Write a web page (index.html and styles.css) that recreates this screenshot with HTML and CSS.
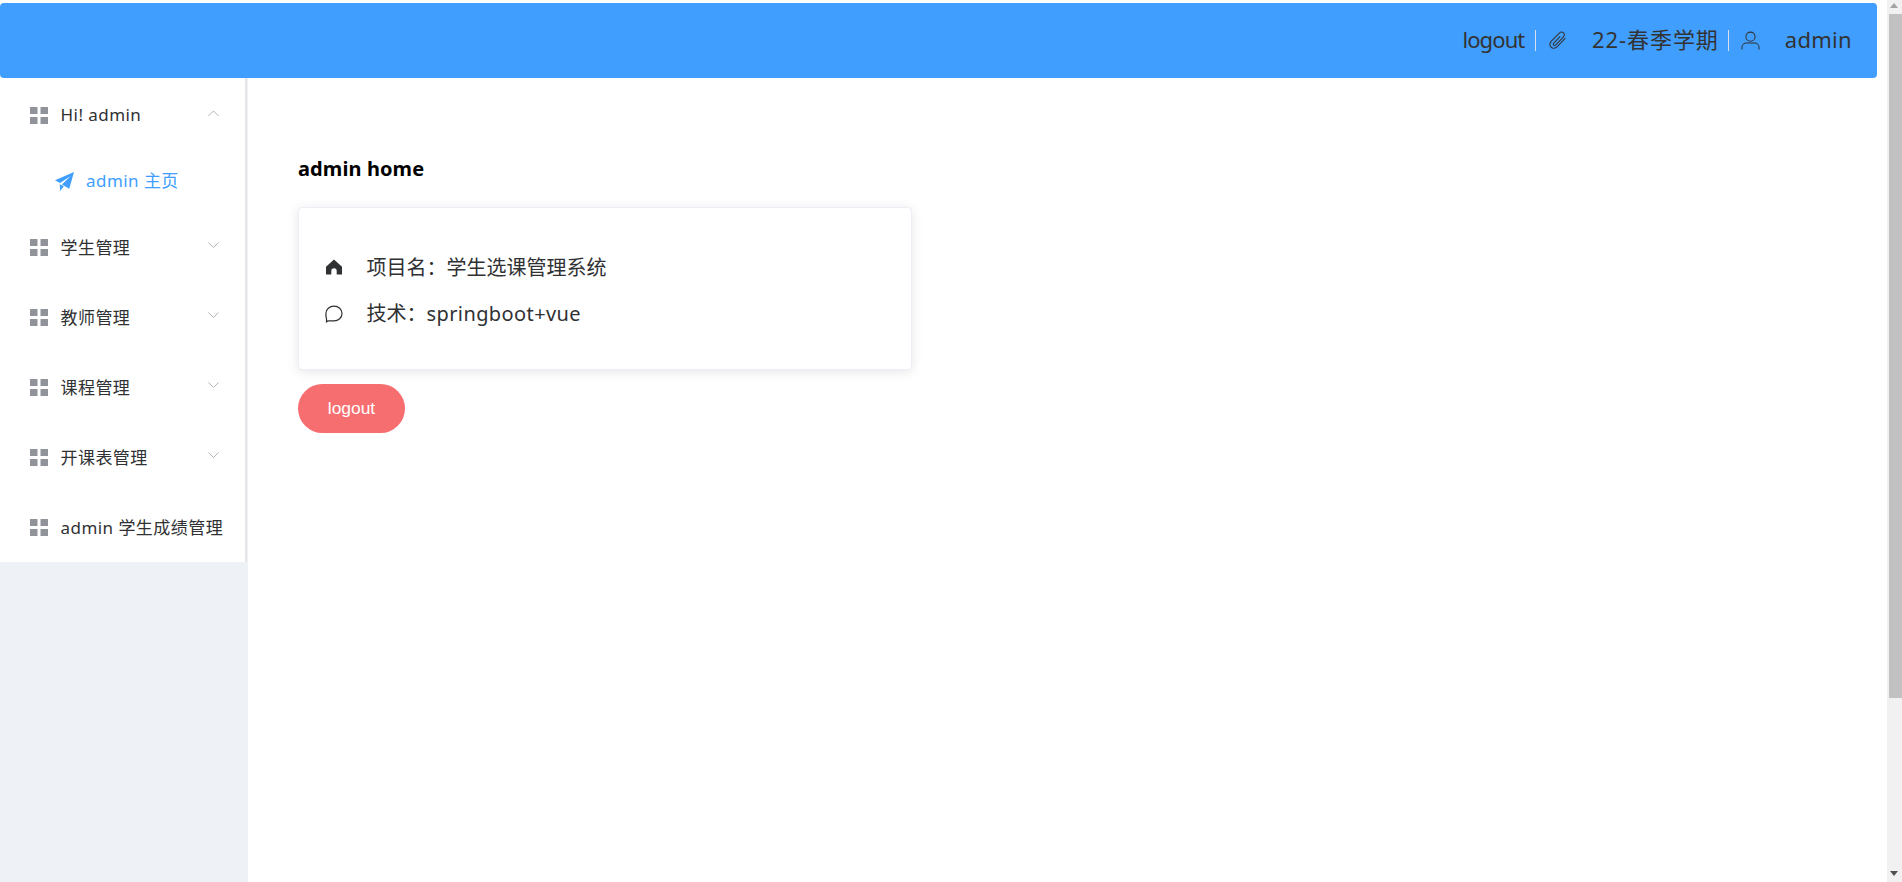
FILE: index.html
```html
<!DOCTYPE html>
<html lang="zh-CN">
<head>
<meta charset="utf-8">
<title>admin home</title>
<link rel="stylesheet" href="styles.css">
</head>
<body>
<div class="shell">
  <div class="page">
    <header class="topbar">
      <span class="top-text out">logout</span>
      <span class="top-sep first-sep"></span>
      <svg class="top-icon" viewBox="0 0 20 20"><path d="M18.300 7.600 9.700 16.500c-2 1.900-4.800 2.200-6.500.4-1.700-1.800-1.300-4.500.6-6.500l7.800-8c1.500-1.300 3.500-1.600 4.700-.4 1.200 1.200 1 3.200-.4 4.700l-7.700 7.900c-.8.700-1.700.8-2.300.2-.6-.6-.4-1.500.4-2.300l6.600-6.800"/></svg>
      <span class="top-text term">22-春季学期</span>
      <span class="top-sep second-sep"></span>
      <svg class="top-icon user" viewBox="0 0 20 20"><circle cx="10" cy="6" r="4.800"/><path d="M1 19.500v-2c0-2.700 2.100-4.800 4.800-4.800h8.400c2.700 0 4.800 2.100 4.800 4.800v2"/></svg>
      <span class="top-text name">admin</span>
    </header>
    <div class="body-row">
      <aside class="aside">
        <nav class="menu">
          <div class="menu-item first"><svg class="grid-icon" viewBox="0 0 18 17"><path d="M0 0h7.500v7H0zM10.500 0H18v7h-7.500zM0 10h7.500v7H0zM10.500 10H18v7h-7.500z"/></svg><span class="label">Hi! admin</span><svg class="chev" viewBox="0 0 12 7"><path d="M.5 6.500 6 1l5.500 5.500"/></svg></div>
          <div class="sub-item"><svg class="plane" viewBox="0 0 18 18"><path d="M18 0 0 7.800l4.800 2.700L14.500 4 6.600 11.800l6.900 4zM4.400 11.600 5 18l3.400-4.400z"/></svg><span class="label">admin 主页</span></div>
          <div class="menu-item"><svg class="grid-icon" viewBox="0 0 18 17"><path d="M0 0h7.500v7H0zM10.500 0H18v7h-7.500zM0 10h7.500v7H0zM10.500 10H18v7h-7.500z"/></svg><span class="label">学生管理</span><svg class="chev" viewBox="0 0 12 7"><path d="M.5.500 6 6l5.500-5.500"/></svg></div>
          <div class="menu-item"><svg class="grid-icon" viewBox="0 0 18 17"><path d="M0 0h7.500v7H0zM10.500 0H18v7h-7.500zM0 10h7.500v7H0zM10.500 10H18v7h-7.500z"/></svg><span class="label">教师管理</span><svg class="chev" viewBox="0 0 12 7"><path d="M.5.500 6 6l5.500-5.500"/></svg></div>
          <div class="menu-item"><svg class="grid-icon" viewBox="0 0 18 17"><path d="M0 0h7.500v7H0zM10.500 0H18v7h-7.500zM0 10h7.500v7H0zM10.500 10H18v7h-7.500z"/></svg><span class="label">课程管理</span><svg class="chev" viewBox="0 0 12 7"><path d="M.5.500 6 6l5.500-5.500"/></svg></div>
          <div class="menu-item"><svg class="grid-icon" viewBox="0 0 18 17"><path d="M0 0h7.500v7H0zM10.500 0H18v7h-7.500zM0 10h7.500v7H0zM10.500 10H18v7h-7.500z"/></svg><span class="label">开课表管理</span><svg class="chev" viewBox="0 0 12 7"><path d="M.5.500 6 6l5.500-5.500"/></svg></div>
          <div class="menu-item"><svg class="grid-icon" viewBox="0 0 18 17"><path d="M0 0h7.500v7H0zM10.500 0H18v7h-7.500zM0 10h7.500v7H0zM10.500 10H18v7h-7.500z"/></svg><span class="label">admin 学生成绩管理</span></div>
        </nav>
      </aside>
      <main class="main">
        <h1 class="title">admin home</h1>
        <section class="card">
          <div class="card-row"><svg class="card-icon home" viewBox="0 0 18 18"><path class="solid" d="M9 1.500 1 8.800v7.700h5.300v-3.600a2.700 2.700 0 0 1 5.400 0v3.600H17V8.800z"/></svg><span class="row-text">项目名：学生选课管理系统</span></div>
          <div class="card-row"><svg class="card-icon" viewBox="0 0 18 18"><path class="line" d="M9 1.200c4.400 0 8 3.200 8 7.300s-3.600 7.300-8 7.300H3.300c-.8 0-1.200.4-1.800 1V13.600C1 12.300.9 10 .9 8.500.9 4.400 4.600 1.200 9 1.200z"/></svg><span class="row-text">技术：<span class="latin">springboot+vue</span></span></div>
        </section>
        <button class="logout" type="button">logout</button>
      </main>
    </div>
  </div>
  <div class="scrollbar">
    <div class="arrow-up"></div>
    <div class="thumb"></div>
    <div class="track-rest"></div>
    <div class="arrow-down"></div>
  </div>
</div>
</body>
</html>
```

FILE: styles.css
```css
* { box-sizing: border-box; }
html, body { margin: 0; height: 100%; overflow: hidden; background: #fff; }
body { font-family: "Noto Sans", "Noto Sans CJK SC", sans-serif; color: #303133; }

.shell { display: flex; height: 882px; }
.page { width: 1887px; display: flex; flex-direction: column; }

.topbar {
  height: 75px;
  margin: 3px 10px 0 0;
  background: #409eff;
  border-radius: 4px;
  display: flex;
  align-items: center;
  justify-content: flex-end;
  padding-right: 25px;
  color: #333;
  flex: none;
}
.top-text { font-size: 22px; line-height: 30px; white-space: nowrap; margin-top: -3px; }
.top-text.out { letter-spacing: -.9px; }
.top-text.term { letter-spacing: .95px; }
.top-text.name { letter-spacing: .3px; margin-left: 25px; }
.top-sep { width: 1px; height: 21px; background: #dcdfe6; margin: 0 12px; }
.top-sep.first-sep { margin-left: 11px; }
.top-sep.second-sep { margin-left: 9px; }
.top-icon { width: 19px; height: 19px; fill: none; stroke: #333; stroke-width: 1.100; margin-right: 24.500px; flex: none; }
.top-icon.user { margin-right: 0; }

.body-row { flex: 1; display: flex; min-height: 0; }

.aside { width: 248px; flex: none; background: #eef1f6; }
.menu { width: 247px; background: #fff; border-right: 2px solid #e6e6e6; padding-top: 2px; }
.menu-item { height: 70px; display: flex; align-items: center; padding-left: 30px; font-size: 17px; letter-spacing: .45px; white-space: nowrap; }
.grid-icon { width: 18px; height: 17px; fill: #909399; margin-right: 12.500px; flex: none; }
.label { flex: 1; margin-top: -2px; }
.chev { width: 11px; height: 6.500px; fill: none; stroke: #a8abb2; stroke-width: 1; margin: -4px 26px 0 0; flex: none; }
.sub-item { height: 62px; display: flex; align-items: center; padding-left: 55px; font-size: 17px; letter-spacing: .45px; color: #409eff; }
.sub-item .label { margin-top: -4px; }
.plane { width: 19px; height: 19px; fill: #409eff; margin-right: 12px; }

.main { flex: 1; padding: 0 0 0 50px; }
.title { margin: 77px 0 0; font-size: 20px; line-height: 28px; font-weight: 700; color: #000; letter-spacing: .1px; }
.card {
  width: 614px;
  height: 163px;
  margin-top: 24px;
  padding: 37px 0 0 26px;
  background: #fff;
  border: 1px solid #ebeef5;
  border-radius: 4px;
  box-shadow: 0 2px 12px rgba(0, 0, 0, .1);
}
.card-row { height: 46px; display: flex; align-items: center; font-size: 20px; color: #303133; }
.row-text { margin-top: -3px; }
.latin { letter-spacing: .4px; }
.card-icon { width: 18px; height: 18px; margin-right: 23.500px; flex: none; }
.card-icon.home { margin-top: -2px; }
.card-icon .solid { fill: #303133; }
.card-icon .line { fill: none; stroke: #303133; stroke-width: 1.200; }
.logout {
  display: block;
  width: 107px;
  height: 49px;
  margin-top: 14px;
  border: 0;
  border-radius: 25px;
  background: #f76e70;
  color: #fff;
  font: 17.400px "Liberation Sans", sans-serif;
}

.scrollbar { width: 15px; background: #f1f1f1; display: flex; flex-direction: column; flex: none; }
.arrow-up { height: 14px; flex: none; position: relative; }
.arrow-up::after { content: ""; position: absolute; left: 3px; top: 3px; border: 4px solid transparent; border-top: 0; border-bottom: 5px solid #a3a3a3; }
.thumb { height: 684px; margin-left: 2px; background: #c1c1c1; flex: none; }
.track-rest { flex: 1; }
.arrow-down { height: 14px; flex: none; position: relative; }
.arrow-down::after { content: ""; position: absolute; left: 3px; top: 3px; border: 4px solid transparent; border-bottom: 0; border-top: 5px solid #505050; }
```
